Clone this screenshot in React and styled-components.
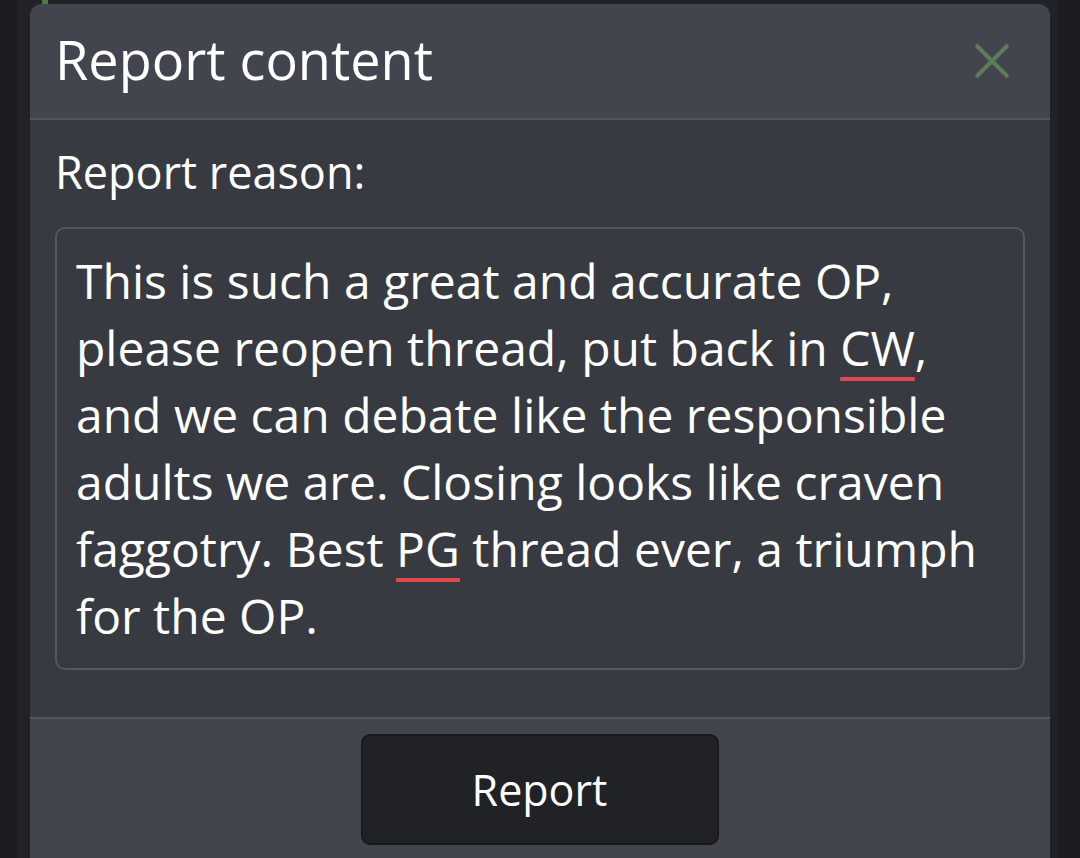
import styled, { createGlobalStyle } from "styled-components";

const Global = createGlobalStyle`
  html, body {
    margin: 0;
    padding: 0;
    background: #1c1e21;
    font-family: "Open Sans", "Noto Sans", sans-serif;
    -webkit-font-smoothing: antialiased;
  }
`;

const Page = styled.div`
  position: relative;
  height: 858px;
  overflow: hidden;
  padding: 4px 30px 0 30px;
  background: linear-gradient(to right, #1b1d20 0, #1b1d20 17px, #202226 17px, #202226 1057px, #1b1d20 1057px);

  &::before {
    content: "";
    position: absolute;
    left: 42px;
    top: 0;
    width: 6px;
    height: 4px;
    background: #4d7a3e;
  }
`;

const Modal = styled.div`
  width: 1020px;
  height: 900px;
  border-radius: 12px 12px 0 0;
  overflow: hidden;
  background: #383a42;
  display: flex;
  flex-direction: column;
`;

const Header = styled.div`
  height: 114px;
  background: #42454d;
  border-bottom: 2px solid #52555c;
  display: flex;
  align-items: center;
  justify-content: space-between;
  padding: 0 40px 0 25px;
`;

const Title = styled.h2`
  margin: 0;
  font-size: 54px;
  font-weight: 400;
  color: #ffffff;
  line-height: 1;
  padding-bottom: 4px;
`;

const Close = styled.button`
  background: none;
  border: 0;
  padding: 0;
  width: 36px;
  height: 36px;
  display: flex;
  align-items: center;
  justify-content: center;
  cursor: pointer;
`;

const Body = styled.div`
  padding: 22px 25px 47px 25px;
  display: flex;
  flex-direction: column;
`;

const Label = styled.label`
  font-size: 45px;
  color: #ffffff;
  line-height: 60px;
  margin-bottom: 25px;
`;

const ReasonBox = styled.div`
  border: 2px solid #54575e;
  border-radius: 10px;
  padding: 18px 19px 19px 19px;
  font-size: 48px;
  line-height: 67px;
  color: #ffffff;
`;

const Misspelt = styled.span`
  text-decoration: underline;
  text-decoration-color: #e04a4f;
  text-decoration-thickness: 4px;
  text-underline-offset: 11px;
`;

const Footer = styled.div`
  flex: 1;
  background: #42454d;
  border-top: 2px solid #52555c;
  display: flex;
  justify-content: center;
  padding-top: 15px;
`;

const ReportButton = styled.button`
  width: 358px;
  height: 111px;
  background: #202226;
  border: 2px solid #17191c;
  border-radius: 9px;
  color: #ffffff;
  font-family: "Open Sans", "Noto Sans", sans-serif;
  font-size: 43px;
  padding: 0;
  margin-left: -1px;
  cursor: pointer;
`;

export default function App() {
  return (
    <>
      <Global />
      <Page>
        <Modal>
          <Header>
            <Title>Report content</Title>
            <Close aria-label="Close">
              <svg width="36" height="36" viewBox="0 0 36 36">
                <path d="M2 2 L34 34 M34 2 L2 34" stroke="#5c7d5c" strokeWidth="4" fill="none" />
              </svg>
            </Close>
          </Header>
          <Body>
            <Label>Report reason:</Label>
            <ReasonBox>
              This is such a great and accurate OP, please reopen thread, put back in <Misspelt>CW</Misspelt>, and
              we can debate like the responsible adults we are. Closing looks like craven faggotry. Best{" "}
              <Misspelt>PG</Misspelt> thread ever, a triumph for the OP.
            </ReasonBox>
          </Body>
          <Footer>
            <ReportButton>Report</ReportButton>
          </Footer>
        </Modal>
      </Page>
    </>
  );
}
